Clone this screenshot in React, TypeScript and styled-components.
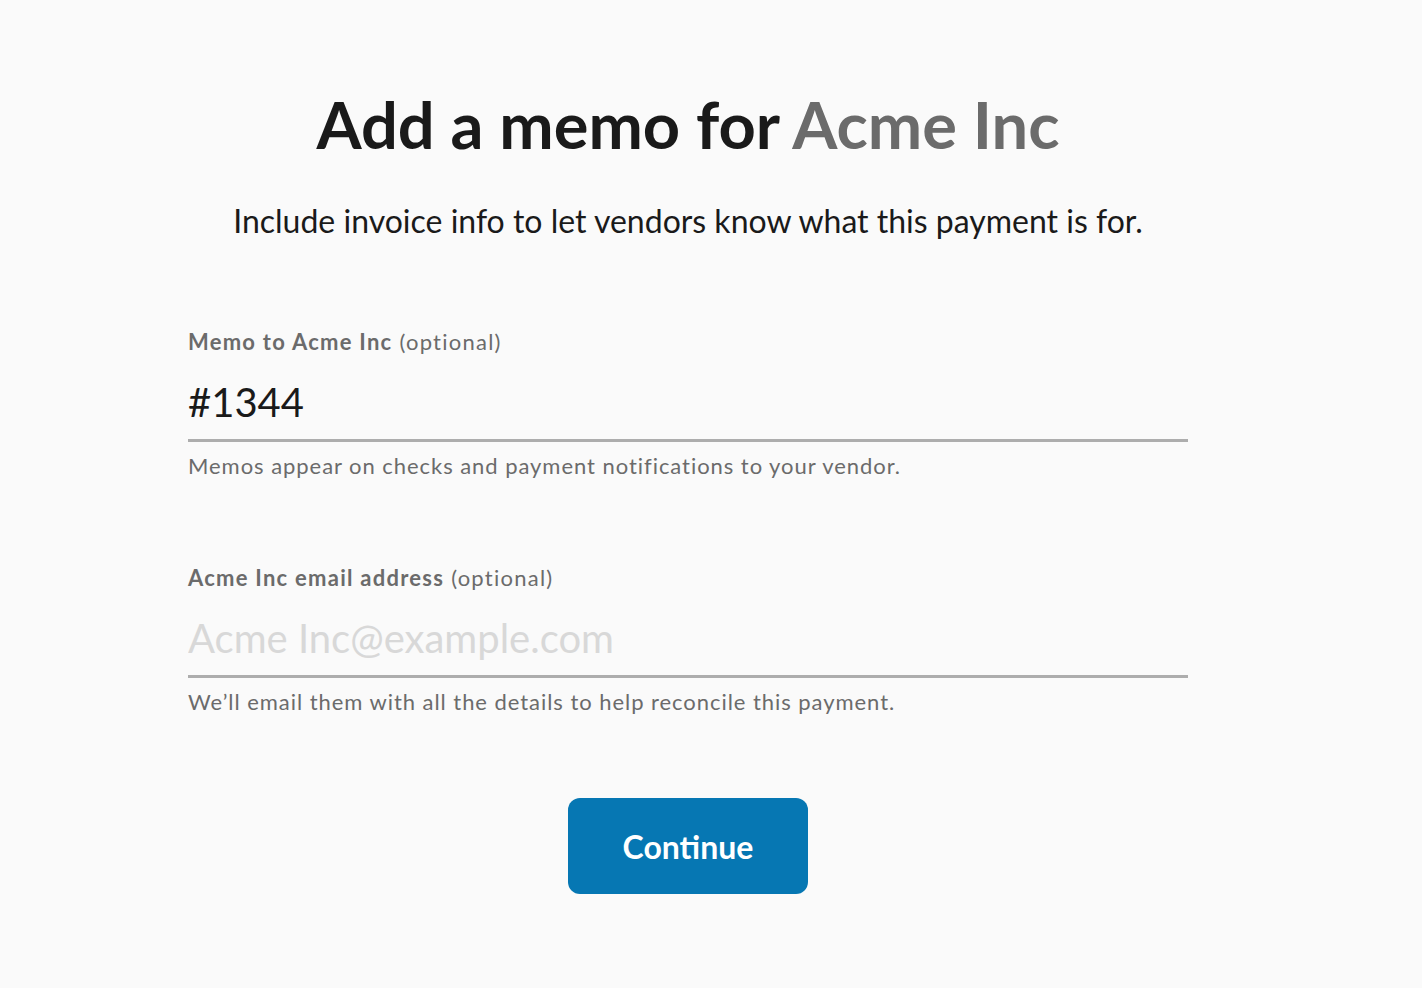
import styled, { createGlobalStyle } from 'styled-components';
import { FC } from 'react';

const GlobalStyle = createGlobalStyle`
  html, body {
    margin: 0;
    padding: 0;
    background: #fafafa;
  }
  body {
    font-family: Lato, 'Open Sans', sans-serif;
    color: #1a1a1a;
  }
`;

const SC = {
  Page: styled.main`
    display: flex;
    justify-content: center;
    min-height: 988px;
    padding-right: 46px;
    box-sizing: border-box;
  `,
  Content: styled.div`
    width: 1000px;
    display: flex;
    flex-direction: column;
    align-items: center;
  `,
  Title: styled.h1`
    margin: 84px 0 0;
    font-size: 65px;
    line-height: 80px;
    font-weight: 700;
    color: #1a1a1a;
  `,
  Vendor: styled.span`
    color: #6b6b6b;
  `,
  Subtitle: styled.p`
    margin: 37px 0 0;
    font-size: 32px;
    line-height: 40px;
    color: #1a1a1a;
  `,
  Form: styled.form`
    width: 100%;
    margin-top: 86px;
    display: flex;
    flex-direction: column;
    gap: 82px;
  `,
  Field: styled.label`
    display: flex;
    flex-direction: column;
  `,
  Label: styled.div`
    font-size: 22px;
    line-height: 30px;
    font-weight: 700;
    letter-spacing: 1.25px;
    color: #6b6b6b;
  `,
  Optional: styled.span`
    font-weight: 400;
    margin-left: 7px;
  `,
  Input: styled.input`
    margin-top: 20px;
    padding: 0 0 12px;
    border: none;
    border-bottom: 3px solid #adadad;
    background: transparent;
    font-family: inherit;
    font-size: 40px;
    line-height: 50px;
    color: #1a1a1a;
    outline: none;
    &::placeholder {
      color: #d8d8d8;
    }
  `,
  Help: styled.div`
    margin-top: 9px;
    font-size: 22px;
    line-height: 30px;
    letter-spacing: 0.95px;
    color: #6b6b6b;
  `,
  Button: styled.button`
    margin-top: 81px;
    width: 240px;
    height: 96px;
    border: none;
    border-radius: 12px;
    background: #0677b3;
    color: #fff;
    font-family: inherit;
    font-size: 32px;
    font-weight: 700;
    cursor: pointer;
  `,
};

type FieldProps = {
  label: string;
  help: string;
  value?: string;
  placeholder?: string;
};

const MemoField: FC<FieldProps> = ({ label, help, value, placeholder }) => (
  <SC.Field>
    <SC.Label>
      {label}
      <SC.Optional>(optional)</SC.Optional>
    </SC.Label>
    <SC.Input defaultValue={value} placeholder={placeholder} />
    <SC.Help>{help}</SC.Help>
  </SC.Field>
);

const App: FC = () => {
  const vendor = 'Acme Inc';
  return (
    <>
      <GlobalStyle />
      <SC.Page>
        <SC.Content>
          <SC.Title>
            Add a memo for <SC.Vendor>{vendor}</SC.Vendor>
          </SC.Title>
          <SC.Subtitle>Include invoice info to let vendors know what this payment is for.</SC.Subtitle>
          <SC.Form onSubmit={(e) => e.preventDefault()}>
            <MemoField
              label={`Memo to ${vendor}`}
              value="#1344"
              help="Memos appear on checks and payment notifications to your vendor."
            />
            <MemoField
              label={`${vendor} email address`}
              placeholder={`${vendor}@example.com`}
              help="We’ll email them with all the details to help reconcile this payment."
            />
          </SC.Form>
          <SC.Button type="button">Continue</SC.Button>
        </SC.Content>
      </SC.Page>
    </>
  );
};

export default App;
